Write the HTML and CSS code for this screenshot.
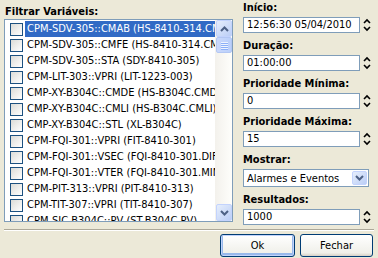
FILE: index.html
```html
<!DOCTYPE html>
<html lang="pt">

<head>
    <meta charset="UTF-8">
    <title>Filtro</title>
    <link rel="stylesheet" href="styles.css">
</head>

<body>
    <div class="dialog">
        <div class="main">
            <div class="left">
                <div class="label list-label">Filtrar Variáveis:</div>
                <div class="listbox">
                    <div class="items">
                        <div class="row selected"><span class="check"></span><span class="text">CPM-SDV-305::CMAB (HS-8410-314.CMAB)</span></div>
                        <div class="row"><span class="check"></span><span class="text">CPM-SDV-305::CMFE (HS-8410-314.CMFE)</span></div>
                        <div class="row"><span class="check"></span><span class="text">CPM-SDV-305::STA (SDY-8410-305)</span></div>
                        <div class="row"><span class="check"></span><span class="text">CPM-LIT-303::VPRI (LIT-1223-003)</span></div>
                        <div class="row"><span class="check"></span><span class="text">CMP-XY-B304C::CMDE (HS-B304C.CMDE)</span></div>
                        <div class="row"><span class="check"></span><span class="text">CMP-XY-B304C::CMLI (HS-B304C.CMLI)</span></div>
                        <div class="row"><span class="check"></span><span class="text">CMP-XY-B304C::STL (XL-B304C)</span></div>
                        <div class="row"><span class="check"></span><span class="text">CPM-FQI-301::VPRI (FIT-8410-301)</span></div>
                        <div class="row"><span class="check"></span><span class="text">CPM-FQI-301::VSEC (FQI-8410-301.DIF)</span></div>
                        <div class="row"><span class="check"></span><span class="text">CPM-FQI-301::VTER (FQI-8410-301.MIN)</span></div>
                        <div class="row"><span class="check"></span><span class="text">CPM-PIT-313::VPRI (PIT-8410-313)</span></div>
                        <div class="row"><span class="check"></span><span class="text">CPM-TIT-307::VPRI (TIT-8410-307)</span></div>
                        <div class="row"><span class="check"></span><span class="text">CPM-SIC-B304C::PV (ST-B304C.PV)</span></div>
                    </div>
                    <div class="scrollbar">
                        <div class="sb-btn">
                            <svg width="9" height="6" viewBox="0 0 9 6"><polyline points="1,5 4.5,1.5 8,5" fill="none" stroke="#4D6185" stroke-width="2"/></svg>
                        </div>
                        <div class="sb-thumb"><span></span><span></span><span></span><span></span></div>
                        <div class="sb-track"></div>
                        <div class="sb-btn">
                            <svg width="9" height="6" viewBox="0 0 9 6"><polyline points="1,1 4.5,4.5 8,1" fill="none" stroke="#4D6185" stroke-width="2"/></svg>
                        </div>
                    </div>
                </div>
            </div>

            <div class="right">
                <div class="group">
                    <div class="label">Início:</div>
                    <div class="field-row">
                        <div class="field">12:56:30 05/04/2010</div>
                        <svg class="spin" width="8" height="16" viewBox="0 0 8 16"><polyline points="1,6 4,3 7,6" fill="none" stroke="#000" stroke-width="1.6"/><polyline points="1,10 4,13 7,10" fill="none" stroke="#000" stroke-width="1.6"/></svg>
                    </div>
                </div>
                <div class="group">
                    <div class="label">Duração:</div>
                    <div class="field-row">
                        <div class="field">01:00:00</div>
                        <svg class="spin" width="8" height="16" viewBox="0 0 8 16"><polyline points="1,6 4,3 7,6" fill="none" stroke="#000" stroke-width="1.6"/><polyline points="1,10 4,13 7,10" fill="none" stroke="#000" stroke-width="1.6"/></svg>
                    </div>
                </div>
                <div class="group">
                    <div class="label">Prioridade Mínima:</div>
                    <div class="field-row">
                        <div class="field">0</div>
                        <svg class="spin" width="8" height="16" viewBox="0 0 8 16"><polyline points="1,6 4,3 7,6" fill="none" stroke="#000" stroke-width="1.6"/><polyline points="1,10 4,13 7,10" fill="none" stroke="#000" stroke-width="1.6"/></svg>
                    </div>
                </div>
                <div class="group">
                    <div class="label">Prioridade Máxima:</div>
                    <div class="field-row">
                        <div class="field">15</div>
                        <svg class="spin" width="8" height="16" viewBox="0 0 8 16"><polyline points="1,6 4,3 7,6" fill="none" stroke="#000" stroke-width="1.6"/><polyline points="1,10 4,13 7,10" fill="none" stroke="#000" stroke-width="1.6"/></svg>
                    </div>
                </div>
                <div class="group">
                    <div class="label">Mostrar:</div>
                    <div class="select">
                        <span class="select-text">Alarmes e Eventos</span>
                        <span class="select-btn">
                            <svg width="9" height="6" viewBox="0 0 9 6"><polyline points="1,1 4.5,4.5 8,1" fill="none" stroke="#4D6185" stroke-width="2"/></svg>
                        </span>
                    </div>
                </div>
                <div class="group">
                    <div class="label">Resultados:</div>
                    <div class="field-row">
                        <div class="field">1000</div>
                        <svg class="spin" width="8" height="16" viewBox="0 0 8 16"><polyline points="1,6 4,3 7,6" fill="none" stroke="#000" stroke-width="1.6"/><polyline points="1,10 4,13 7,10" fill="none" stroke="#000" stroke-width="1.6"/></svg>
                    </div>
                </div>
            </div>
        </div>

        <div class="separator"></div>

        <div class="buttons">
            <button class="btn default">Ok</button>
            <button class="btn">Fechar</button>
        </div>
    </div>
</body>

</html>
```

FILE: styles.css
```css
body,
html {
    margin: 0;
    width: 378px;
    height: 258px;
    background-color: #ECE9D8;
    font-family: "DejaVu Sans Condensed", "Liberation Sans", sans-serif;
    font-size: 11px;
    color: #000;
    overflow: hidden;
}

.dialog {
    display: flex;
    flex-direction: column;
    height: 258px;
}

.main {
    display: flex;
    gap: 10px;
    padding: 0 7px 0 4px;
}

.label {
    font-weight: bold;
    line-height: 13px;
    height: 13px;
    white-space: nowrap;
}

/* left column: checked list */
.left {
    width: 229px;
    display: flex;
    flex-direction: column;
    padding-top: 5px;
}

.list-label {
    padding-left: 1px;
    margin-bottom: 1px;
}

.listbox {
    height: 201px;
    border: 1px solid #7F9DB9;
    background-color: #fff;
    display: flex;
}

.items {
    flex: 1;
    overflow: hidden;
    padding-top: 1px;
}

.row {
    display: flex;
    align-items: center;
    height: 16px;
    padding-left: 5px;
}

.check {
    flex: none;
    width: 11px;
    height: 11px;
    border: 1px solid #1C5180;
    background: linear-gradient(135deg, #DCDCD7, #fff);
    margin-right: 2px;
}

.text {
    flex: 1;
    height: 16px;
    line-height: 16px;
    padding-left: 2px;
    white-space: nowrap;
    overflow: hidden;
}

.row.selected .text {
    background-color: #316AC5;
    color: #fff;
}

.scrollbar {
    flex: none;
    width: 17px;
    display: flex;
    flex-direction: column;
    background: linear-gradient(90deg, #F3F1EC, #FEFEFB);
}

.sb-btn {
    height: 15px;
    margin: 0 0 0 1px;
    border: 1px solid #C3D3FD;
    border-radius: 2px;
    background: linear-gradient(135deg, #E6EEFC, #BBCEF6);
    display: flex;
    align-items: center;
    justify-content: center;
}

.sb-thumb {
    height: 14px;
    margin: 0 0 0 1px;
    border: 1px solid #B3C7F3;
    border-radius: 2px;
    background: linear-gradient(90deg, #CAD8FB, #BAD0FB);
    display: flex;
    flex-direction: column;
    align-items: center;
    justify-content: center;
    gap: 1px;
}

.sb-thumb span {
    width: 7px;
    height: 1px;
    background-color: #EEF4FE;
    border-bottom: 1px solid #8CB0F8;
    margin-bottom: -1px;
}

.sb-track {
    flex: 1;
}

/* right column: fields */
.right {
    flex: 1;
    display: flex;
    flex-direction: column;
    gap: 6px;
    padding-top: 1px;
}

.group {
    display: flex;
    flex-direction: column;
    gap: 3px;
}

.field-row {
    display: flex;
    align-items: center;
    gap: 3px;
}

.field {
    flex: 1;
    height: 14px;
    line-height: 14px;
    border: 1px solid #7F9DB9;
    background-color: #fff;
    padding-left: 3px;
}

.spin {
    flex: none;
}

.select {
    display: flex;
    align-items: center;
    height: 14px;
    border: 1px solid #7F9DB9;
    background-color: #fff;
    margin-right: 2px;
    padding: 1px 1px 1px 3px;
}

.select-text {
    flex: 1;
}

.select-btn {
    width: 15px;
    height: 14px;
    border: 1px solid #C3D3FD;
    border-radius: 2px;
    box-sizing: border-box;
    background: linear-gradient(135deg, #E6EEFC, #BBCEF6);
    display: flex;
    align-items: center;
    justify-content: center;
}

/* bottom bar */
.separator {
    margin: 4px 4px 0 4px;
    height: 1px;
    background-color: #ACA899;
    border-bottom: 1px solid #fff;
}

.buttons {
    display: flex;
    justify-content: flex-end;
    gap: 5px;
    padding: 3px 5px 0 0;
}

.btn {
    width: 73px;
    height: 23px;
    border: 1px solid #003C74;
    border-radius: 3px;
    background: linear-gradient(180deg, #fff, #F0F0EA 85%, #D6D0C5);
    font-family: "DejaVu Sans Condensed", "Liberation Sans", sans-serif;
    font-size: 11px;
    color: #000;
    padding: 0;
}

.btn.default {
    width: 75px;
    box-shadow: inset 0 0 0 1px #C1D3FB, inset 0 -1px 0 2px #98B8EA;
}
```
